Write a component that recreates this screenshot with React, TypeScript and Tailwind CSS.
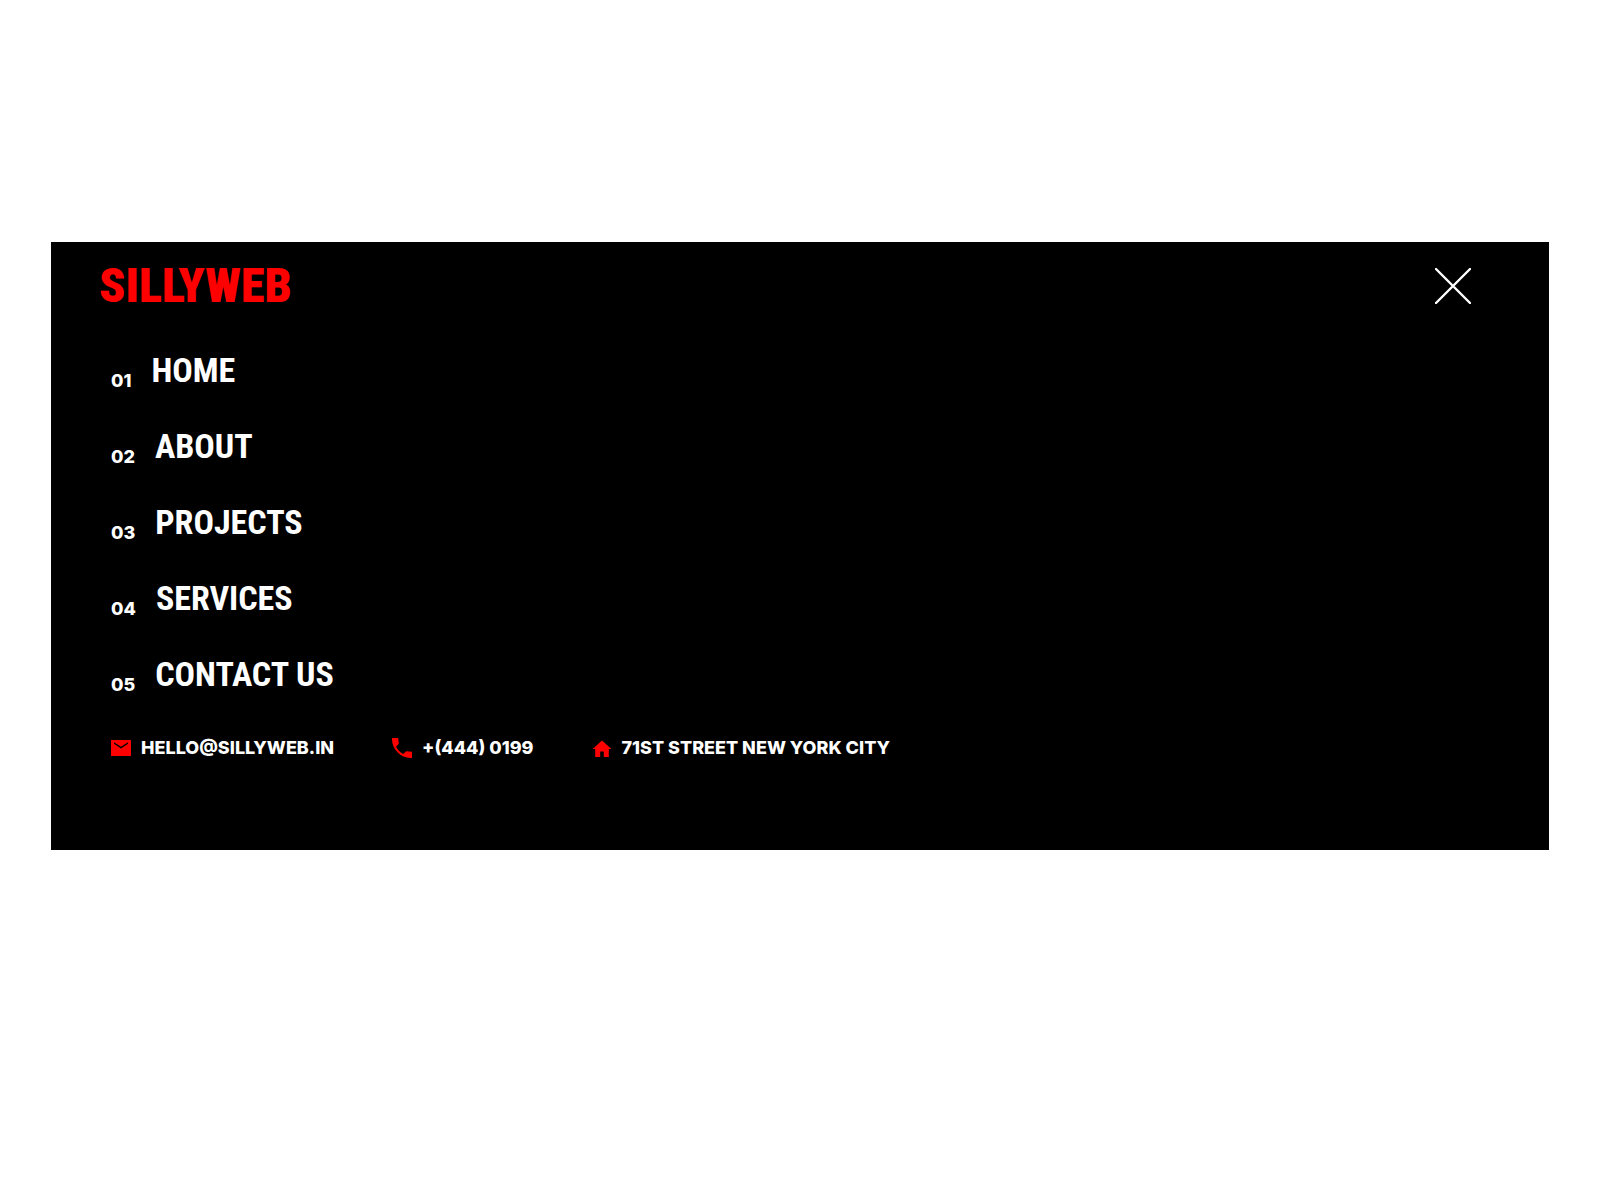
const MENU_ITEMS = [
  { label: 'HOME', href: '#home' },
  { label: 'ABOUT', href: '#about' },
  { label: 'PROJECTS', href: '#projects' },
  { label: 'SERVICES', href: '#services' },
  { label: 'CONTACT US', href: '#contact' },
]

/** Solid square-cornered envelope with a cut-out flap. */
function MailIcon() {
  return (
    <svg viewBox="2 2 20 20" className="size-5 shrink-0 fill-[#ff0000]" aria-hidden="true">
      <path d="M22 4H2v16h20V4zM19 7.8L12 12.6 5 7.8V6.3l7 4.5 7-4.5z" />
    </svg>
  )
}

function PhoneIcon() {
  return (
    <svg viewBox="3 3 18 18" className="size-5 shrink-0 fill-[#ff0000]" aria-hidden="true">
      <path d="M21 15.46l-5.27-.61-2.52 2.52c-2.83-1.44-5.15-3.75-6.59-6.59l2.53-2.53L8.54 3H3.03C2.45 13.18 10.82 21.55 21 20.97v-5.51z" />
    </svg>
  )
}

function HomeIcon() {
  return (
    <svg viewBox="0 0 20 20" className="size-5 shrink-0 fill-[#ff0000]" aria-hidden="true">
      <path d="M10 2.5L.6 11h2.6v8h5v-5.5h3.6V19h5v-8h2.6z" />
    </svg>
  )
}

function CloseIcon() {
  return (
    <svg viewBox="0 0 36 36" className="size-9" fill="none" aria-hidden="true">
      <path d="M1 1 L35 35 M35 1 L1 35" stroke="#fff" strokeWidth="2.4" strokeLinecap="round" />
    </svg>
  )
}

export default function App() {
  return (
    <main className="min-h-screen bg-white px-[51px] pt-[242px] font-['Inter',sans-serif] text-white">
      <section className="bg-black pb-[66px]">
        <header className="flex h-[88px] items-center justify-between pr-[78px] pl-12">
          <a
            href="#home"
            className="font-['Roboto_Condensed','Liberation_Sans_Narrow',sans-serif] text-5xl leading-none font-black text-[#ff0000]"
          >
            SILLYWEB
          </a>
          <button type="button" aria-label="Close menu" className="cursor-pointer">
            <CloseIcon />
          </button>
        </header>

        <nav className="pt-0.5 pl-[60px]">
          <ul>
            {MENU_ITEMS.map((item, i) => (
              <li key={item.label} className="flex h-[76px] items-center">
                <a href={item.href} className="flex items-end gap-5">
                  <span className="text-lg leading-none font-extrabold">0{i + 1}</span>
                  <span className="font-['Roboto_Condensed','Liberation_Sans_Narrow',sans-serif] text-[34px] leading-10 font-bold">
                    {item.label}
                  </span>
                </a>
              </li>
            ))}
          </ul>
        </nav>

        <address className="flex h-[72px] items-center gap-[58px] pl-[60px] text-lg font-extrabold not-italic">
          <a href="mailto:hello@sillyweb.in" className="flex items-center gap-2.5">
            <MailIcon />
            HELLO@SILLYWEB.IN
          </a>
          <a href="tel:+4440199" className="flex items-center gap-2.5">
            <PhoneIcon />
            +(444) 0199
          </a>
          <span className="flex items-center gap-2.5">
            <HomeIcon />
            71ST STREET NEW YORK CITY
          </span>
        </address>
      </section>
    </main>
  )
}
